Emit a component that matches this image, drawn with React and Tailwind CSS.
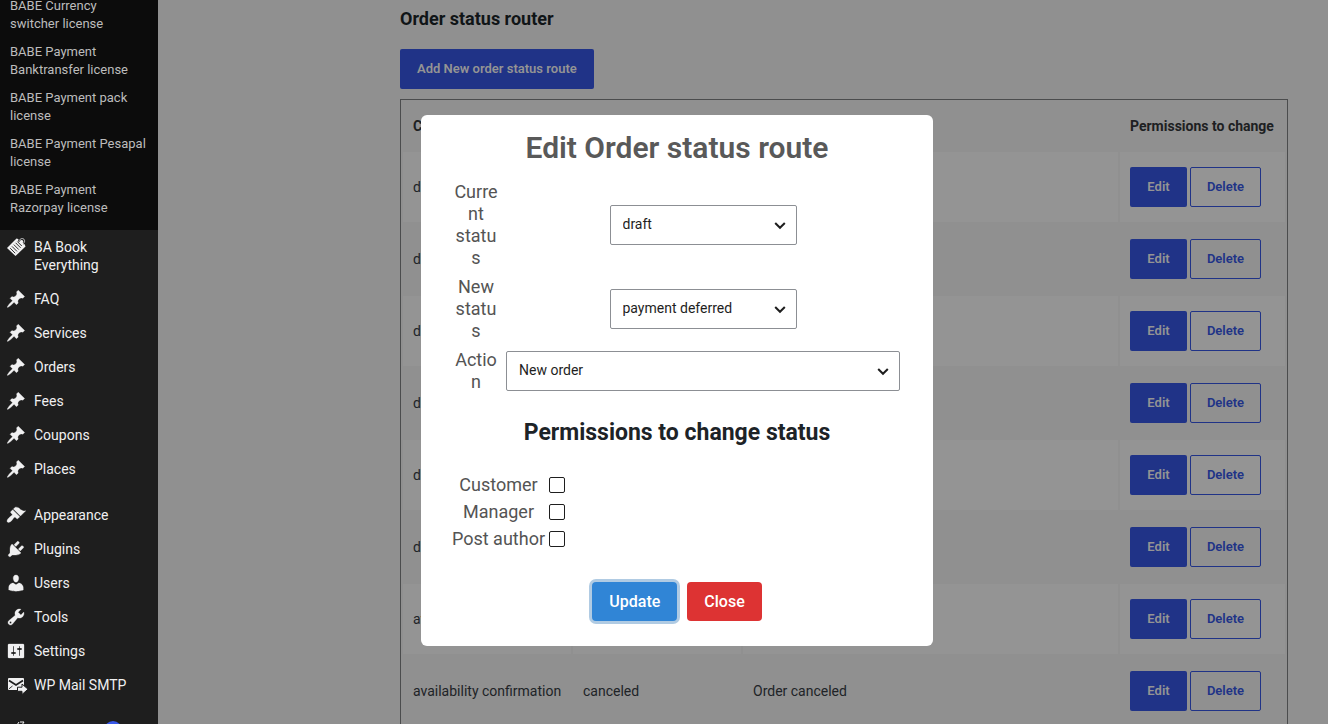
const PIN = "M10.44 3.02l1.82-1.82 6.36 6.35-1.83 1.82c-1.05-.68-2.48-.57-3.41.36l-.75.75c-.92.93-1.04 2.35-.35 3.41l-1.83 1.82-2.41-2.41-2.8 2.79c-.42.42-3.38 2.71-3.8 2.29s1.86-3.39 2.28-3.81l2.79-2.79L4.1 9.36l1.83-1.82c1.05.69 2.48.57 3.4-.36l.75-.75c.93-.92 1.05-2.35.36-3.41z";
const BRUSH = "M14.48 11.06L7.41 3.99l1.5-1.5c.5-.56 2.3-.47 3.51.32 1.21.8 1.43 1.28 2.91 2.1 1.18.64 2.45 1.26 4.45.85zm-.71.71L6.7 4.7 4.93 6.47c-.39.39-.39 1.02 0 1.41l1.06 1.06c.39.39.39 1.03 0 1.42-.6.6-1.43 1.11-2.21 1.69-.35.26-.7.53-1.01.84C1.43 14.23.4 16.08 1.4 17.07c.99 1 2.84-.03 4.18-1.36.31-.31.58-.66.85-1.02.57-.78 1.08-1.61 1.69-2.21.39-.39 1.02-.39 1.41 0l1.06 1.06c.39.39 1.02.39 1.41 0z";
const PLUG = "M13.11 4.36L9.87 7.6 8 5.73l3.24-3.24c.35-.34 1.05-.2 1.56.32.52.51.66 1.21.31 1.55zm-8 1.77l.91-1.12 9.01 9.01-1.19.84c-.71.71-2.63 1.16-3.82 1.16H6.14L4.9 17.26c-.59.59-1.54.59-2.12 0-.59-.58-.59-1.53 0-2.12l1.24-1.24v-3.88c0-1.13.4-3.19 1.09-3.89zm7.26 3.97l3.24-3.24c.34-.35 1.04-.21 1.55.31.52.51.66 1.21.31 1.55l-3.24 3.25z";
const USER = "M10 9.25c-2.27 0-2.73-3.44-2.73-3.44C7 4.02 7.82 2 9.97 2c2.16 0 2.98 2.02 2.71 3.81 0 0-.41 3.44-2.68 3.44zm0 2.57L12.72 10c2.39 0 4.52 2.33 4.52 4.53v2.49s-3.65 1.13-7.24 1.13c-3.65 0-7.24-1.13-7.24-1.13v-2.49c0-2.25 1.94-4.48 4.47-4.48z";
const WRENCH = "M16.68 9.77c-1.34 1.34-3.3 1.67-4.95.99l-5.41 6.52c-.99.99-2.59.99-3.58 0s-.99-2.59 0-3.57l6.52-5.42c-.68-1.65-.35-3.61.99-4.95 1.28-1.28 3.12-1.62 4.72-1.06l-2.89 2.89 2.82 2.82 2.86-2.87c.53 1.58.18 3.39-1.08 4.65zM3.81 16.21c.4.39 1.04.39 1.43 0 .4-.4.4-1.04 0-1.43-.39-.4-1.03-.4-1.43 0-.39.39-.39 1.03 0 1.43z";
const SLIDERS = "M18 16V4c0-.55-.45-1-1-1H3c-.55 0-1 .45-1 1v12c0 .55.45 1 1 1h14c.55 0 1-.45 1-1zM8 11h1c.55 0 1 .45 1 1s-.45 1-1 1H8v1.5c0 .28-.22.5-.5.5s-.5-.22-.5-.5V13H6c-.55 0-1-.45-1-1s.45-1 1-1h1V5.5c0-.28.22-.5.5-.5s.5.22.5.5V11zm5-2h-1c-.55 0-1-.45-1-1s.45-1 1-1h1V5.5c0-.28.22-.5.5-.5s.5.22.5.5V7h1c.55 0 1 .45 1 1s-.45 1-1 1h-1v5.5c0 .28-.22.5-.5.5s-.5-.22-.5-.5V9z";

function Icon({ d }) {
  return (
    <svg viewBox="0 0 20 20" className="-my-px size-5 shrink-0 fill-current stroke-current" strokeWidth="0.3" aria-hidden="true">
      <path fillRule="evenodd" d={d} />
    </svg>
  );
}

function TagIcon() {
  return (
    <svg viewBox="0 0 20 20" className="-my-px size-5 shrink-0" fill="none" aria-hidden="true">
      <path d="M10.500 1.500L1 11l8.500 8L19.500 9.500 17 3.500z" fill="currentColor" />
      <path d="M4.200 11.200l5 5M6 9.400l5 5M7.800 7.600l5 5M9.600 5.800l5 5M11.400 4.600l4.400 4.400" stroke="#1e1e1e" strokeWidth="0.900" />
      <path d="M12.800 4.600c.2-3 3.600-4 5.200-2.600 1.400 1.400.8 3.800-.8 4.600" stroke="#1e1e1e" strokeWidth="2.200" />
      <path d="M13 4.600c.2-2.800 3.400-3.800 4.900-2.400 1.300 1.300.7 3.600-.7 4.400" stroke="currentColor" strokeWidth="0.800" />
    </svg>
  );
}

function MailIcon() {
  return (
    <svg viewBox="0 0 22 20" className="-my-px h-5 w-[22px] shrink-0" aria-hidden="true">
      <path d="M2 4q0-1 1-1h14q1 0 1 1v11H3q-1 0-1-1z" fill="currentColor" />
      <path d="M3 5.500l7 4.500 7-4.500" fill="none" stroke="#1e1e1e" strokeWidth="1.800" />
      <path d="M3 13.800l3.500-2.800" stroke="#1e1e1e" strokeWidth="0.900" />
      <path d="M11.500 12.200h4.500V9l6 5.200-6 5.300v-3.200h-4.500z" fill="currentColor" stroke="#1e1e1e" strokeWidth="1" />
    </svg>
  );
}

const licenses = [
  "BABE Currency switcher license",
  "BABE Payment Banktransfer license",
  "BABE Payment pack license",
  "BABE Payment Pesapal license",
  "BABE Payment Razorpay license",
];

const contentItems = ["FAQ", "Services", "Orders", "Fees", "Coupons", "Places"];

const adminItems = [
  ["Appearance", BRUSH],
  ["Plugins", PLUG],
  ["Users", USER],
  ["Tools", WRENCH],
  ["Settings", SLIDERS],
];

function MenuItem({ icon, children }) {
  return (
    <li>
      <a href="#" className="flex py-2 pr-2 pl-1.5 text-sm leading-[18px]">
        <span className="flex w-7 shrink-0 items-start">{icon}</span>
        <span>{children}</span>
      </a>
    </li>
  );
}

function Sidebar() {
  return (
    <nav className="flex w-[158px] shrink-0 flex-col justify-end overflow-hidden bg-[#1e1e1e] text-[#f0f0f1]">
      <ul className="bg-[#0c0c0c] pb-2 text-[13px] leading-[18px] text-[#bcbcbc]">
        {licenses.map((name) => (
          <li key={name}>
            <a href="#" className="block px-2.5 py-[5px]">{name}</a>
          </li>
        ))}
      </ul>
      <ul>
        <MenuItem icon={<TagIcon />}>BA Book Everything</MenuItem>
        {contentItems.map((name) => (
          <MenuItem key={name} icon={<Icon d={PIN} />}>{name}</MenuItem>
        ))}
      </ul>
      <ul className="mt-3">
        {adminItems.map(([name, d]) => (
          <MenuItem key={name} icon={<Icon d={d} />}>{name}</MenuItem>
        ))}
        <MenuItem icon={<MailIcon />}>WP Mail SMTP</MenuItem>
      </ul>
      <div className="flex h-[22px] shrink-0 items-start overflow-hidden pt-[19px] pl-[17px]">
        <svg viewBox="0 0 8 8" className="size-2 shrink-0" fill="none" stroke="currentColor" aria-hidden="true">
          <path d="M0 4l2-3M3 1h4M5 4l2-3" />
        </svg>
        <span className="ml-[79px] size-[18px] shrink-0 rounded-full bg-[#3858e9]" />
      </div>
    </nav>
  );
}

const routes = [
  ["draft", "payment deferred", "New order"],
  ["draft", "payment expected", "New order"],
  ["draft", "payment processing", "New order"],
  ["draft", "availability confirmation", "New order"],
  ["draft", "canceled", "Order canceled"],
  ["draft", "completed", "Order completed"],
  ["availability confirmation", "payment expected", "Order updated"],
  ["availability confirmation", "canceled", "Order canceled"],
];

function RoutesPage() {
  return (
    <main className="h-full overflow-hidden pr-10 pl-[242px]">
      <h2 className="pt-1.5 text-lg leading-[26px] font-bold text-[#101517]">Order status router</h2>
      <button className="mt-[17px] h-10 rounded-xs bg-[#203387] px-[17px] text-[13px] font-semibold text-[#949494]">
        Add New order status route
      </button>
      <div className="mt-2.5 border border-[#4b4c4d] text-sm text-[#202327]">
        <table className="w-full table-fixed border-separate border-spacing-[2px]">
          <colgroup>
            <col className="w-[168px]" />
            <col className="w-[168px]" />
            <col />
            <col className="w-[165px]" />
          </colgroup>
          <thead>
            <tr className="h-12 text-left text-[#1d2022]">
              <th className="px-2.5 font-bold whitespace-nowrap">Current status</th>
              <th className="px-2.5 font-bold whitespace-nowrap">New status</th>
              <th className="px-2.5 font-bold">Action</th>
              <th className="px-2.5 font-bold whitespace-nowrap">Permissions to change</th>
            </tr>
          </thead>
          <tbody>
            {routes.map((route, i) => (
              <tr key={i} className="h-[70px] odd:bg-[#949494]">
                {route.map((text, j) => (
                  <td key={j} className="px-2.5 whitespace-nowrap">{text}</td>
                ))}
                <td className="px-2.5">
                  <div className="flex gap-[3px]">
                    <button className="h-10 w-[57px] rounded-xs bg-[#203387] text-[13px] font-semibold text-[#949494]">Edit</button>
                    <button className="h-10 w-[71px] rounded-xs border border-[#203387] text-[13px] font-semibold text-[#203387]">Delete</button>
                  </div>
                </td>
              </tr>
            ))}
          </tbody>
        </table>
      </div>
    </main>
  );
}

function Select({ id, className, children }) {
  return (
    <div className={`relative ${className}`}>
      <select id={id} className="h-10 w-full appearance-none rounded-xs border border-[#8c8f94] bg-white pr-8 pb-0.5 pl-3 text-sm text-[#1e1e1e]">
        {children}
      </select>
      <svg viewBox="0 0 20 20" className="pointer-events-none absolute top-3 right-[9px] size-4" aria-hidden="true">
        <path d="M4 7.500l6 6 6-6" fill="none" stroke="#1e1e1e" strokeWidth="2.500" />
      </svg>
    </div>
  );
}

function Field({ id, label, className, children }) {
  return (
    <div className="flex items-center">
      <label htmlFor={id} className="w-11 text-center leading-[22px] wrap-break-word">{label}</label>
      <div className="ml-2 flex flex-1 justify-center">
        <Select id={id} className={className}>{children}</Select>
      </div>
    </div>
  );
}

const roles = ["Customer", "Manager", "Post author"];

function EditDialog() {
  return (
    <section role="dialog" aria-labelledby="dialog-title" className="w-[512px] rounded-md bg-white px-[30px] pt-[15px] pb-[25px] text-lg text-[#545454]">
      <h2 id="dialog-title" className="text-center text-[30px] leading-9 font-semibold text-[#595959]">Edit Order status route</h2>
      <div className="mt-[15px] flex flex-col gap-[7px] px-[3px]">
        <Field id="current-status" label="Current status" className="w-[187px]">
          <option>draft</option>
        </Field>
        <Field id="new-status" label="New status" className="w-[187px]">
          <option>payment deferred</option>
        </Field>
        <Field id="action" label="Action" className="w-full">
          <option>New order</option>
        </Field>
      </div>
      <h3 className="mt-6 text-center text-[23px] leading-8 font-bold text-[#1d2327]">Permissions to change status</h3>
      <div className="mt-[22px] flex flex-col">
        {roles.map((role) => (
          <div key={role} className="flex items-center gap-[3px]">
            <label htmlFor={role} className="w-[95px] text-center leading-[27px] whitespace-nowrap">{role}</label>
            <input id={role} type="checkbox" className="size-4 appearance-none rounded-xs border border-[#1e1e1e] bg-white" />
          </div>
        ))}
      </div>
      <div className="mt-[30px] flex justify-center gap-2.5">
        <button className="h-[39px] rounded bg-[#3085d6] px-[17px] text-base font-medium text-white ring-3 ring-[#b0cbe3]">Update</button>
        <button className="h-[39px] rounded bg-[#dd3333] px-[17px] text-base font-medium text-white">Close</button>
      </div>
    </section>
  );
}

export default function App() {
  return (
    <div className="flex h-screen overflow-hidden bg-[#909090] font-[Roboto,sans-serif]">
      <Sidebar />
      <div className="min-w-0 flex-1">
        <RoutesPage />
      </div>
      <div className="fixed inset-0 flex items-center justify-center pt-[37px] pl-[26px]">
        <EditDialog />
      </div>
    </div>
  );
}
